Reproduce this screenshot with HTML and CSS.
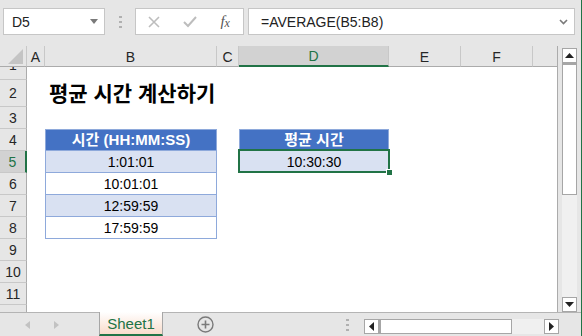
FILE: index.html
```html
<!DOCTYPE html>
<html lang="ko">
<head>
    <meta charset="UTF-8">
    <title>평균 시간 계산하기</title>
    <link rel="stylesheet" href="styles.css">
</head>
<body>
    <div class="formula-bar">
        <div class="name-box">
            <span>D5</span>
            <svg width="8" height="5" viewBox="0 0 8 5"><path d="M0 0h8L4 5z" fill="#7a7a7a"/></svg>
        </div>
        <div class="grip">
            <svg width="3" height="12" viewBox="0 0 3 12"><path d="M0 0h3v2H0zM0 5h3v2H0zM0 10h3v2H0z" fill="#b0b0b0"/></svg>
        </div>
        <div class="fx-box">
            <span class="fx-icon">
                <svg width="12" height="12" viewBox="0 0 12 12"><path d="M1 1l10 10M11 1L1 11" stroke="#bdbdbd" stroke-width="1.6"/></svg>
            </span>
            <span class="fx-icon">
                <svg width="14" height="12" viewBox="0 0 14 12"><path d="M1 6l4 4 8-9" stroke="#bdbdbd" stroke-width="2" fill="none"/></svg>
            </span>
            <span class="fx-icon fx-text"><i>f</i><i class="x">x</i></span>
        </div>
        <div class="formula-input">
            <span>=AVERAGE(B5:B8)</span>
            <svg width="9" height="6" viewBox="0 0 9 6"><path d="M1 1l3.5 3.5L8 1" stroke="#7a7a7a" stroke-width="1.6" fill="none"/></svg>
        </div>
    </div>

    <div class="main">
        <div class="sheet">
            <div class="corner">
                <svg width="15" height="15" viewBox="0 0 15 15"><path d="M15 0v15H0z" fill="#c4c4c4"/></svg>
            </div>
            <div class="col-head">A</div>
            <div class="col-head">B</div>
            <div class="col-head">C</div>
            <div class="col-head active">D</div>
            <div class="col-head">E</div>
            <div class="col-head">F</div>
            <div class="col-head last"></div>

            <div class="row-head row-one"><span>1</span></div>
            <div class="span7"></div>

            <div class="row-head">2</div>
            <div></div>
            <div class="title span6">평균 시간 계산하기</div>

            <div class="row-head">3</div>
            <div class="span7"></div>

            <div class="row-head">4</div>
            <div></div>
            <div class="th">시간 (HH:MM:SS)</div>
            <div></div>
            <div class="th">평균 시간</div>
            <div class="span3"></div>

            <div class="row-head active">5</div>
            <div></div>
            <div class="td band">1:01:01</div>
            <div></div>
            <div class="td band selected">10:30:30</div>
            <div class="span3"></div>

            <div class="row-head">6</div>
            <div></div>
            <div class="td">10:01:01</div>
            <div class="span5"></div>

            <div class="row-head">7</div>
            <div></div>
            <div class="td band">12:59:59</div>
            <div class="span5"></div>

            <div class="row-head">8</div>
            <div></div>
            <div class="td">17:59:59</div>
            <div class="span5"></div>

            <div class="row-head">9</div>
            <div class="span7"></div>
            <div class="row-head">10</div>
            <div class="span7"></div>
            <div class="row-head">11</div>
            <div class="span7"></div>
            <div class="row-head row-last"><span>12</span></div>
            <div class="span7"></div>
        </div>

        <div class="vscroll">
            <div class="sb-btn">
                <svg width="9" height="5" viewBox="0 0 9 5"><path d="M0 5L4.5 0 9 5z" fill="#222"/></svg>
            </div>
            <div class="v-thumb"></div>
            <div class="v-track"></div>
            <div class="sb-btn">
                <svg width="9" height="5" viewBox="0 0 9 5"><path d="M0 0h9L4.5 5z" fill="#222"/></svg>
            </div>
        </div>
    </div>

    <div class="tab-bar">
        <div class="tab-nav">
            <svg width="5" height="8" viewBox="0 0 5 8"><path d="M5 0v8L0 4z" fill="#c2c2c2"/></svg>
            <svg width="5" height="8" viewBox="0 0 5 8"><path d="M0 0v8l5-4z" fill="#c2c2c2"/></svg>
        </div>
        <div class="tab">Sheet1</div>
        <div class="tab-add">
            <svg width="17" height="17" viewBox="0 0 17 17"><circle cx="8.5" cy="8.5" r="7.5" stroke="#7a7a7a" stroke-width="1.4" fill="none"/><path d="M8.5 4.5v8M4.5 8.5h8" stroke="#7a7a7a" stroke-width="1.6"/></svg>
        </div>
        <div class="tab-grip">
            <svg width="3" height="12" viewBox="0 0 3 12"><path d="M0 0h3v2H0zM0 5h3v2H0zM0 10h3v2H0z" fill="#b0b0b0"/></svg>
        </div>
        <div class="hscroll">
            <div class="sb-btn">
                <svg width="5" height="9" viewBox="0 0 5 9"><path d="M5 0v9L0 4.5z" fill="#222"/></svg>
            </div>
            <div class="h-thumb"></div>
            <div class="h-track"></div>
            <div class="sb-btn">
                <svg width="5" height="9" viewBox="0 0 5 9"><path d="M0 0v9l5-4.5z" fill="#222"/></svg>
            </div>
        </div>
    </div>
</body>
</html>
```

FILE: styles.css
```css
body {
    margin: 0;
    width: 581px;
    height: 336px;
    overflow: hidden;
    background: #e6e6e6;
    border-right: 1px solid #217346;
    font-family: "Liberation Sans", "Noto Sans CJK KR", sans-serif;
    font-size: 14px;
    color: #000;
}

/* formula bar */
.formula-bar {
    display: flex;
    height: 46px;
    box-sizing: border-box;
    padding: 8px 0 0 3px;
}
.name-box, .fx-box, .formula-input {
    height: 27px;
    box-sizing: border-box;
    background: #fff;
    border: 1px solid #c6c6c6;
    display: flex;
    align-items: center;
}
.name-box {
    width: 102px;
    justify-content: space-between;
    padding: 0 6px 0 8px;
    color: #222;
}
.grip {
    width: 30px;
    height: 27px;
    display: flex;
    align-items: center;
    justify-content: center;
}
.fx-box {
    width: 109px;
}
.fx-icon {
    width: 37px;
    display: flex;
    justify-content: center;
}
.fx-text {
    font-family: "Liberation Serif", serif;
    font-size: 15px;
    color: #555;
}
.fx-text .x {
    font-size: 12px;
    margin-top: 3px;
}
.formula-input {
    width: 327px;
    margin-left: 4px;
    justify-content: space-between;
    padding: 0 6px 0 12px;
    color: #222;
}

/* sheet */
.main {
    display: flex;
    height: 266px;
}
.sheet {
    width: 558px;
    display: grid;
    grid-template-columns: 27px 18px 172px 22px 150px 72px 72px 25px;
    grid-template-rows: 21px 13px 27px 22px repeat(8, 22px) 7px;
    background: #fff;
    border-right: 1px solid #ababab;
    box-sizing: border-box;
    overflow: hidden;
}
.corner, .col-head, .row-head {
    background: #e6e6e6;
    color: #262626;
    display: flex;
    align-items: center;
    justify-content: center;
    box-sizing: border-box;
    overflow: hidden;
}
.corner {
    align-items: flex-end;
    justify-content: flex-end;
    padding: 0 3px 2px 0;
    border-right: 1px solid #c8c8c8;
    border-bottom: 1px solid #ababab;
}
.col-head {
    border-right: 1px solid #c8c8c8;
    border-bottom: 1px solid #ababab;
    padding-top: 1px;
}
.col-head.last { border-right: none; }
.row-head {
    border-right: 1px solid #ababab;
    border-bottom: 1px solid #c8c8c8;
}
.row-one {
    align-items: flex-end;
    line-height: 22px;
}
.row-one span { margin-bottom: 3px; }
.row-last {
    align-items: flex-start;
    line-height: 22px;
    border-bottom: none;
}
.row-last span { margin-top: 3px; }
.col-head.active {
    background: #d2d2d2;
    color: #217346;
    border-bottom: 2px solid #217346;
}
.row-head.active {
    background: #d2d2d2;
    color: #217346;
    border-right: 2px solid #217346;
}

.span3 { grid-column: span 3; }
.span5 { grid-column: span 5; }
.span6 { grid-column: span 6; }
.span7 { grid-column: span 7; }

.title {
    font-family: "Noto Sans CJK KR", sans-serif;
    font-size: 21px;
    font-weight: bold;
    line-height: 27px;
    padding: 0 0 0 4px;
    margin-top: -1px;
}
.th, .td {
    display: flex;
    align-items: center;
    justify-content: center;
    box-sizing: border-box;
    border: 1px solid #8ea9db;
    border-top: none;
    line-height: 20px;
}
.th {
    border-top: 1px solid #8ea9db;
    background: #4472c4;
    color: #fff;
    font-weight: bold;
    font-size: 15px;
}
.band { background: #d9e1f2; }
.selected {
    position: relative;
}
.selected::after {
    content: "";
    position: absolute;
    top: -2px;
    left: -2px;
    right: -2px;
    bottom: -1px;
    border: 2px solid #217346;
}
.selected::before {
    content: "";
    position: absolute;
    right: -5px;
    bottom: -4px;
    width: 5px;
    height: 5px;
    background: #217346;
    border: 1px solid #fff;
    z-index: 1;
}

/* scrollbars */
.vscroll {
    width: 15px;
    margin: 0 4px;
    padding-top: 2px;
    display: flex;
    flex-direction: column;
}
.sb-btn {
    width: 15px;
    height: 15px;
    box-sizing: border-box;
    background: #fff;
    border: 1px solid #a6a6a6;
    display: flex;
    align-items: center;
    justify-content: center;
    flex: none;
}
.v-thumb {
    height: 132px;
    box-sizing: border-box;
    background: #fff;
    border: 1px solid #a6a6a6;
    border-top: 2px solid #a6a6a6;
}
.v-track {
    flex: 1;
    background: #f0f0f0;
}

/* sheet tabs */
.tab-bar {
    display: flex;
    height: 24px;
    box-sizing: border-box;
    border-top: 1px solid #b4b4b4;
}
.tab-nav {
    width: 99px;
    display: flex;
    align-items: center;
    gap: 24px;
    padding-left: 25px;
    box-sizing: border-box;
}
.tab {
    width: 64px;
    height: 24px;
    margin-top: -1px;
    box-sizing: border-box;
    border-left: 1px solid #a6a6a6;
    border-right: 1px solid #a6a6a6;
    border-bottom: 2px solid #217346;
    background: linear-gradient(#ffffff, #f9dccb);
    color: #217346;
    font-size: 15px;
    display: flex;
    align-items: center;
    justify-content: center;
    padding-top: 1px;
}
.tab-add {
    width: 84px;
    display: flex;
    align-items: center;
    justify-content: center;
}
.tab-grip {
    width: 117px;
    display: flex;
    align-items: center;
    justify-content: flex-end;
    padding-right: 15px;
    box-sizing: border-box;
}
.hscroll {
    width: 195px;
    height: 15px;
    margin-top: 6px;
    display: flex;
}
.h-thumb {
    width: 133px;
    box-sizing: border-box;
    background: #fff;
    border: 1px solid #a6a6a6;
    border-left: 2px solid #a6a6a6;
}
.h-track {
    flex: 1;
    background: #f0f0f0;
}
```
